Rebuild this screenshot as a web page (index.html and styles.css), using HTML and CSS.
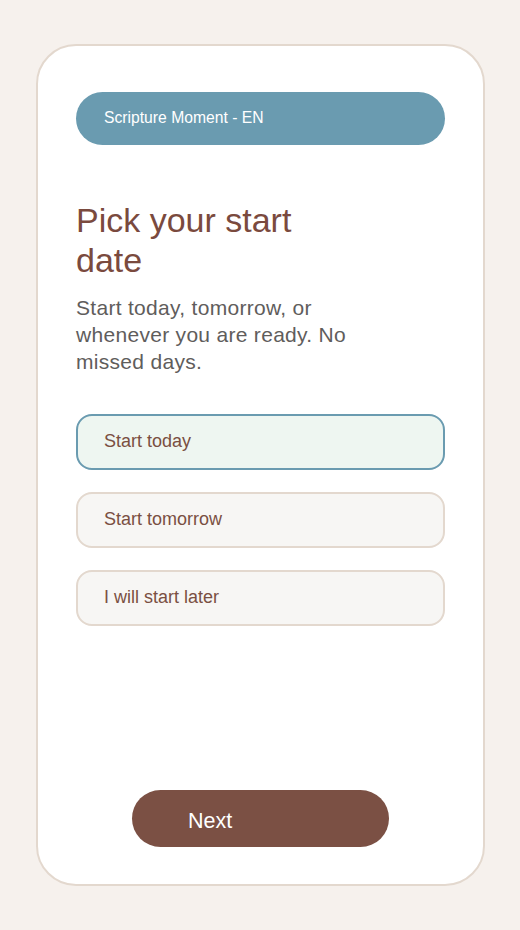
FILE: index.html
```html
<!DOCTYPE html>
<html lang="en">
<head>
<meta charset="UTF-8">
<meta name="viewport" content="width=device-width, initial-scale=1.0">
<title>Pick your start date</title>
<link rel="stylesheet" href="styles.css">
</head>
<body>
    <div class="card">
        <div class="brand">Scripture Moment - EN</div>

        <h1 class="title">Pick your start date</h1>
        <p class="subtitle">Start today, tomorrow, or whenever you are ready. No missed days.</p>

        <!-- 选项 -->
        <div class="options">
            <div class="option selected">Start today</div>
            <div class="option">Start tomorrow</div>
            <div class="option">I will start later</div>
        </div>

        <button class="next_button">Next</button>
    </div>
</body>
</html>
```

FILE: styles.css
```css
body {
    margin: 0;
    background-color: #f6f1ed;
    font-family: "Liberation Sans", Arial, sans-serif;
    padding: 44px 35px 44px 36px;
    height: 930px;
    box-sizing: border-box;
}
.card {
    background-color: #fff;
    border: 2px solid #e3d8ce;
    border-radius: 40px;
    height: 842px;
    box-sizing: border-box;
    padding: 46px 38px 37px;
    display: flex;
    flex-direction: column;
}
.brand {
    background-color: #6a9bb0;
    color: #fff;
    font-size: 15.7px;
    height: 53px;
    line-height: 51px;
    border-radius: 27px;
    padding-left: 28px;
}
.title {
    color: #7a4a3e;
    font-size: 34px;
    font-weight: normal;
    line-height: 40px;
    margin: 55px 0 14px;
    max-width: 280px;
}
.subtitle {
    color: #5f5d5c;
    font-size: 21px;
    letter-spacing: 0.3px;
    line-height: 27px;
    margin: 0;
    max-width: 300px;
}
.options {
    display: flex;
    flex-direction: column;
    gap: 22px;
    margin-top: 39px;
}
.option {
    height: 56px;
    box-sizing: border-box;
    border: 2px solid #e3d8ce;
    background-color: #f7f6f4;
    border-radius: 16px;
    padding-left: 26px;
    line-height: 51px;
    font-size: 18px;
    color: #7a4f42;
}
.option.selected {
    border-color: #6a9bb0;
    background-color: #eef6f1;
}
.next_button {
    margin: auto auto 0;
    width: 257px;
    height: 57px;
    border: none;
    border-radius: 29px;
    background-color: #7b5044;
    color: #fff;
    font-family: inherit;
    font-size: 21.5px;
    text-align: left;
    padding: 5px 0 0 56px;
    cursor: pointer;
}
```
